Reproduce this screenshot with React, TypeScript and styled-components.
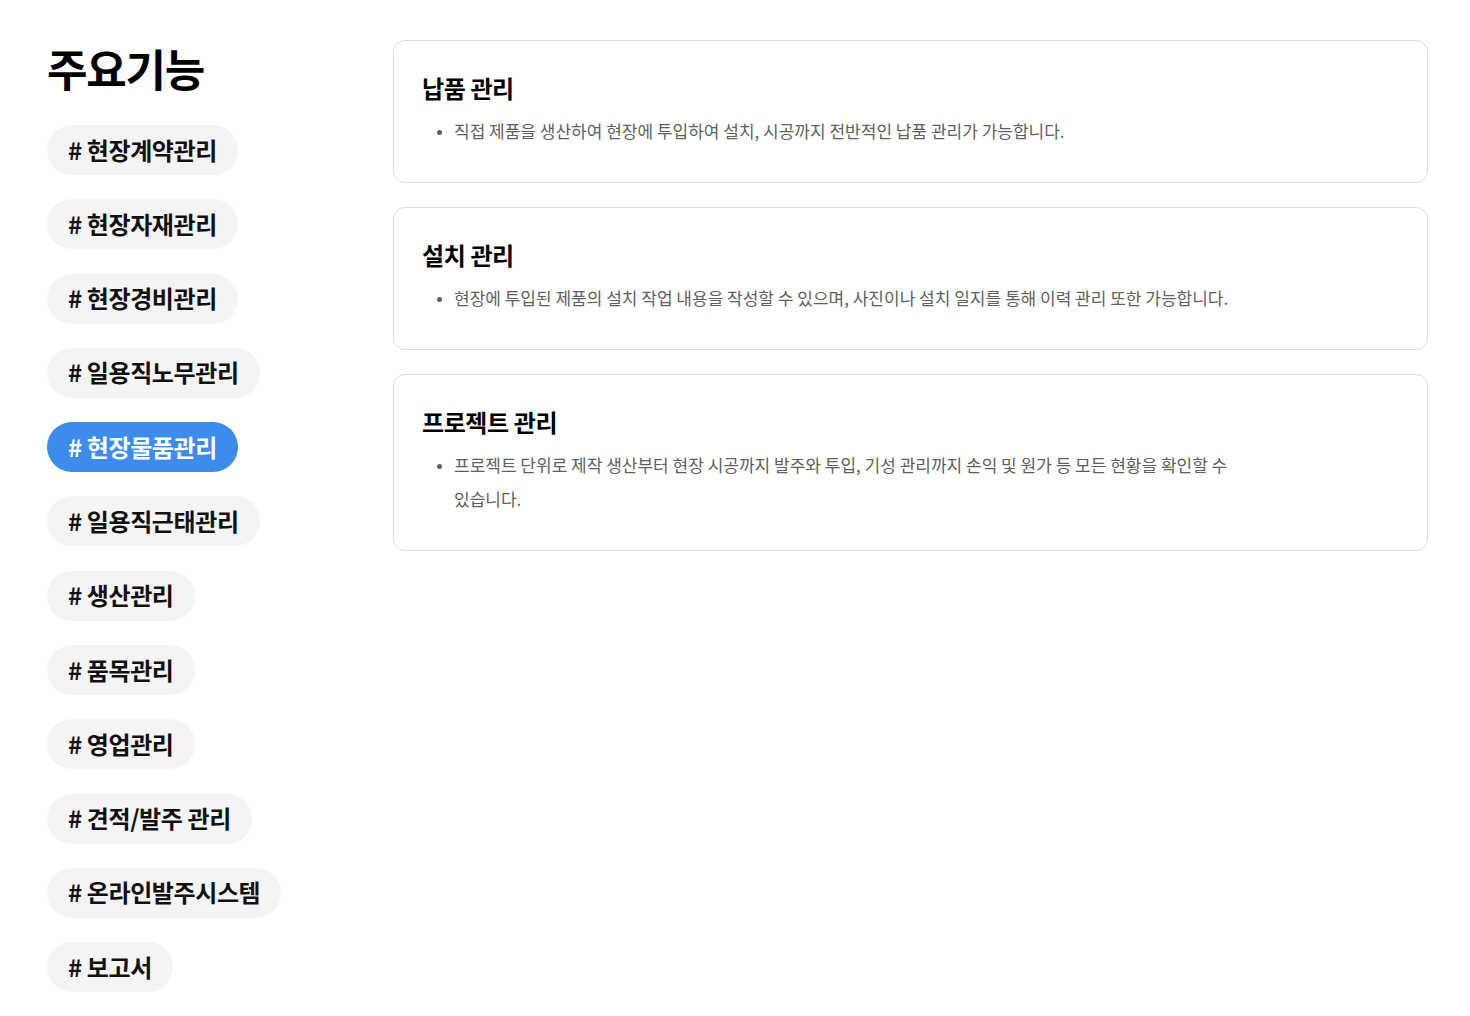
import React from "react";
import styled, { createGlobalStyle } from "styled-components";

const features = [
  "현장계약관리",
  "현장자재관리",
  "현장경비관리",
  "일용직노무관리",
  "현장물품관리",
  "일용직근태관리",
  "생산관리",
  "품목관리",
  "영업관리",
  "견적/발주 관리",
  "온라인발주시스템",
  "보고서",
];

const details = [
  {
    title: "납품 관리",
    items: [
      "직접 제품을 생산하여 현장에 투입하여 설치, 시공까지 전반적인 납품 관리가 가능합니다.",
    ],
  },
  {
    title: "설치 관리",
    items: [
      "현장에 투입된 제품의 설치 작업 내용을 작성할 수 있으며, 사진이나 설치 일지를 통해 이력 관리 또한 가능합니다.",
    ],
  },
  {
    title: "프로젝트 관리",
    items: [
      "프로젝트 단위로 제작 생산부터 현장 시공까지 발주와 투입, 기성 관리까지 손익 및 원가 등 모든 현황을 확인할 수 있습니다.",
    ],
  },
];

export default function App() {
  const activeIndex = 4;

  return (
    <>
      <GlobalStyle />
      <Page>
        <Side>
          <Heading>주요기능</Heading>
          <ChipList>
            {features.map((name, i) => (
              <li key={name}>
                <Chip active={i === activeIndex}># {name}</Chip>
              </li>
            ))}
          </ChipList>
        </Side>
        <Content>
          {details.map((d) => (
            <Card key={d.title}>
              <CardTitle>{d.title}</CardTitle>
              <BulletList>
                {d.items.map((t) => (
                  <Bullet key={t}>{t}</Bullet>
                ))}
              </BulletList>
            </Card>
          ))}
        </Content>
      </Page>
    </>
  );
}

const GlobalStyle = createGlobalStyle`
  * {
    box-sizing: border-box;
  }

  body {
    margin: 0;
    background: #fff;
    color: #111;
    font-family: "Noto Sans CJK KR", "Noto Sans", sans-serif;
  }
`;

const Page = styled.div`
  display: flex;
  align-items: flex-start;
  padding: 40px 42px 40px 47px;
`;

const Side = styled.aside`
  width: 346px;
  flex-shrink: 0;
`;

const Heading = styled.h2`
  margin: 0 0 29px;
  font-size: 44px;
  font-weight: 700;
  line-height: 56px;
  letter-spacing: -1.2px;
  color: #000;
`;

const ChipList = styled.ul`
  list-style: none;
  margin: 0;
  padding: 0;
  display: flex;
  flex-direction: column;
  align-items: flex-start;
  gap: 24.3px;
`;

const Chip = styled.button<{ active: boolean }>`
  height: 50px;
  padding: 0 21px 2px;
  border: none;
  border-radius: 25px;
  display: flex;
  align-items: center;
  font-family: inherit;
  font-size: 24px;
  font-weight: 700;
  letter-spacing: -0.4px;
  white-space: pre;
  cursor: pointer;
  background: ${(props) => (props.active ? "#3d8bea" : "#f4f4f4")};
  color: ${(props) => (props.active ? "#fff" : "#111")};
`;

const Content = styled.main`
  flex: 1;
  display: flex;
  flex-direction: column;
  gap: 24px;
`;

const Card = styled.section`
  border: 1px solid #dcdcdc;
  border-radius: 12px;
  padding: 29px 28px 34px;
`;

const CardTitle = styled.h3`
  margin: 0 0 8px;
  font-size: 24px;
  font-weight: 700;
  line-height: 36px;
  letter-spacing: -0.4px;
  color: #000;
`;

const BulletList = styled.ul`
  margin: 0;
  padding: 0 0 0 32px;
  max-width: 822px;
`;

const Bullet = styled.li`
  font-size: 17px;
  line-height: 34px;
  color: #5f5f5f;

  &::marker {
    font-size: 13px;
  }
`;
